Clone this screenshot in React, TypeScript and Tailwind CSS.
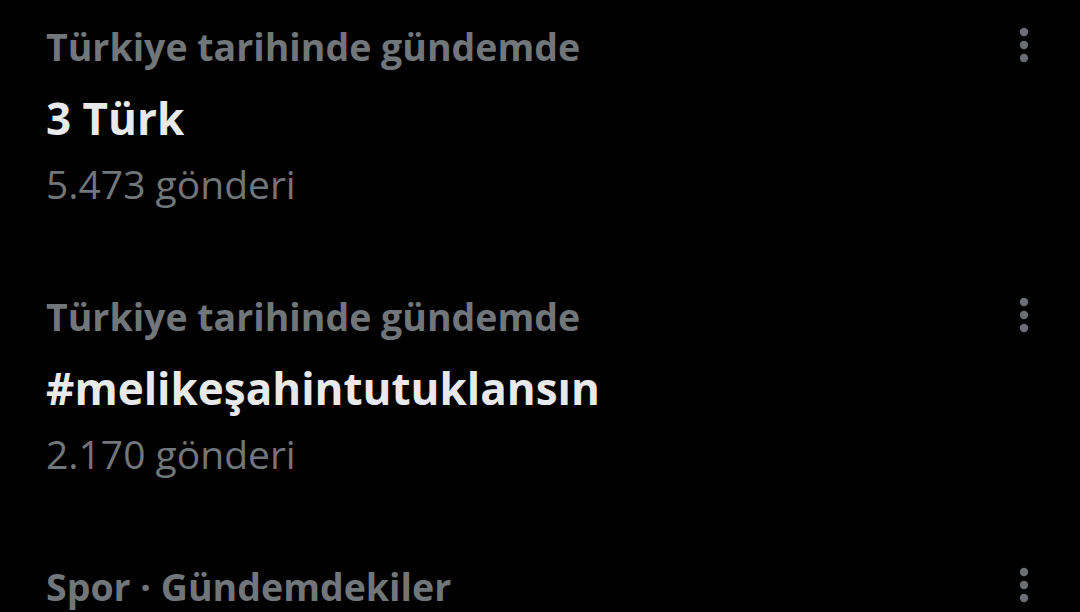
const trends = [
  { context: "Türkiye tarihinde gündemde", title: "3 Türk", count: "5.473 gönderi" },
  { context: "Türkiye tarihinde gündemde", title: "#melikeşahintutuklansın", count: "2.170 gönderi" },
  { context: "Spor · Gündemdekiler", title: "Galatasaray", count: "12,4 B gönderi" },
];

const MoreIcon = () => (
  <svg width="12" height="38" viewBox="0 0 12 38" className="fill-[#6b6f73]">
    <circle cx="6" cy="5" r="4.2" />
    <circle cx="6" cy="18" r="4.2" />
    <circle cx="6" cy="31" r="4.2" />
  </svg>
);

export default function App() {
  return (
    <div
      className="h-[612px] w-[1080px] overflow-hidden bg-black"
      style={{ fontFamily: '"Open Sans", "Noto Sans", sans-serif' }}
    >
      {trends.map((t, i) => (
        <div key={i} className="flex h-[270px] items-start justify-between pl-[46px] pr-[50px] pt-[22px]">
          <div className="flex flex-col">
            <span className="text-[37.5px] font-bold leading-[50px] text-[#71767b]">{t.context}</span>
            <span className="mt-[18px] text-[44px] font-bold leading-[56px] text-[#e7e9ea]">{t.title}</span>
            <span className="mt-[13px] text-[39px] font-normal leading-[50px] text-[#71767b]">{t.count}</span>
          </div>
          <div className="pt-[5px]">
            <MoreIcon />
          </div>
        </div>
      ))}
    </div>
  );
}
